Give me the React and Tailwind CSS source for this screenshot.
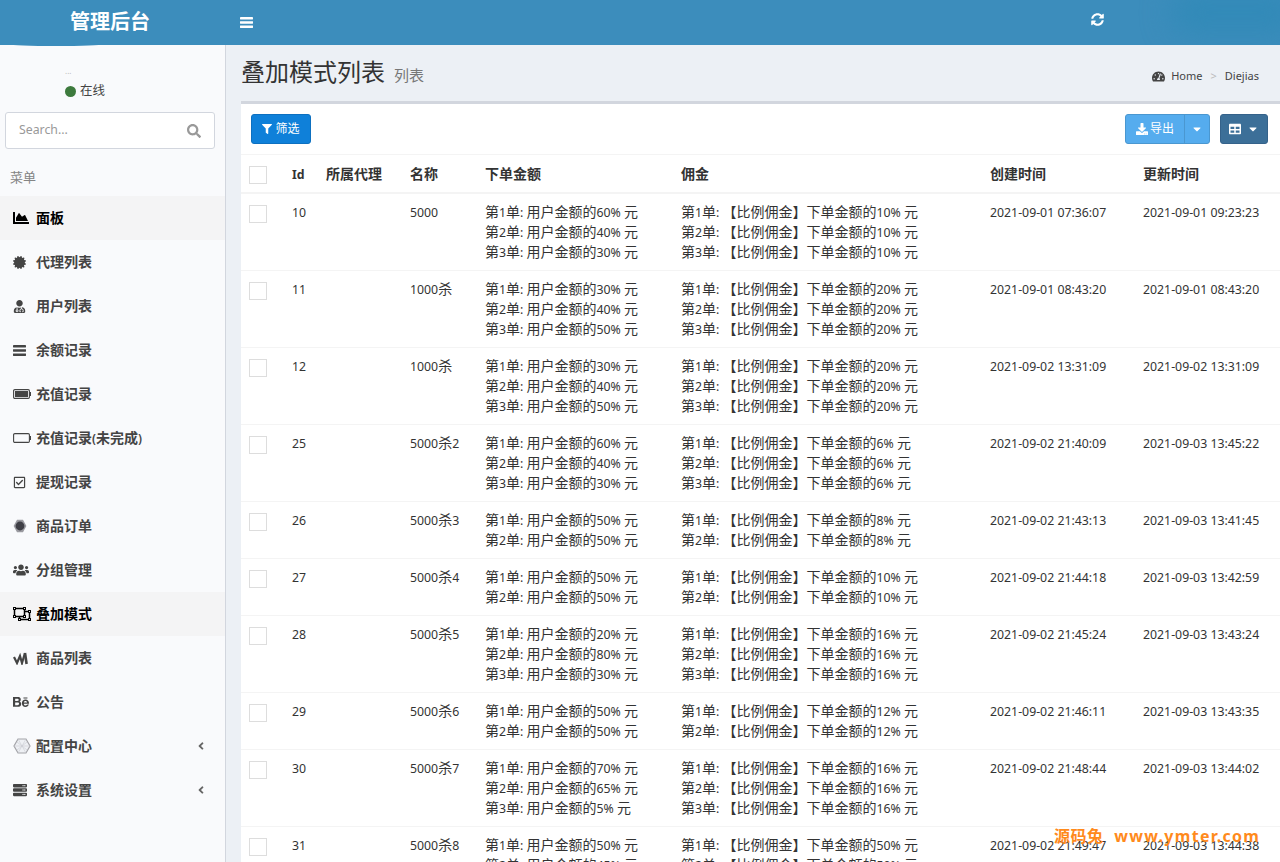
import { FaSyncAlt, FaSearch, FaChartArea, FaCertificate, FaUserMd, FaRegCheckSquare, FaUsers, FaRegObjectUngroup, FaBehance, FaServer, FaAngleLeft, FaTachometerAlt, FaFilter, FaDownload, FaTable, FaCaretDown } from 'react-icons/fa'

const FONT = '[font-family:"Noto_Sans","Noto_Sans_CJK_SC",sans-serif]'

function Bars() {
  return (
    <svg viewBox="0 0 13 11" className="w-[13px] h-[11px]" fill="currentColor">
      <rect y="0" width="13" height="2.5" rx=".4" />
      <rect y="4.2" width="13" height="2.5" rx=".4" />
      <rect y="8.4" width="13" height="2.5" rx=".4" />
    </svg>
  )
}

function Battery({ full }) {
  return (
    <svg viewBox="0 0 18 10" className="w-[18px] h-[10px]" fill="none">
      <rect x=".6" y=".6" width="15.8" height="8.8" rx="1.2" stroke="#444444" strokeWidth="1.1" />
      {full && <rect x="2" y="2" width="13" height="6" fill="#444444" />}
      <rect x="16.8" y="3" width="1.2" height="4" fill="#444444" />
    </svg>
  )
}

function DenseHex() {
  return (
    <svg viewBox="0 0 14 14" className="w-[14px] h-[14px]">
      <path d="M4 .8h6L13.4 7 10 13.2H4L.6 7z" fill="#9a9aa0" />
      <circle cx="7" cy="7" r="4.4" fill="#3f3f46" />
    </svg>
  )
}

function PaleHex() {
  return (
    <svg viewBox="0 0 18 16" className="w-[18px] h-[16px]">
      <path d="M5 1h8l4 7-4 7H5L1 8z" fill="#eef0f4" stroke="#a3a3a8" strokeWidth="1.2" />
      <path d="M5 1l8 14M13 1L5 15M1 8h16M4 4l10 8M14 4L4 12" stroke="#c9cbd1" strokeWidth=".6" />
    </svg>
  )
}

function WMark() {
  return (
    <svg viewBox="0 0 15 13" className="w-[15px] h-[13px]">
      <path d="M1 5l3 6 3-7 2 7 3-10" fill="none" stroke="#444444" strokeWidth="2.2" />
      <path d="M12 1l1.6 11" fill="none" stroke="#444444" strokeWidth="2.6" />
    </svg>
  )
}

const menu = [
  { icon: <FaChartArea className="w-[16px] h-[16px]" />, label: '面板', active: true },
  { icon: <FaCertificate className="w-[13px] h-[13px]" />, label: '代理列表' },
  { icon: <FaUserMd className="w-[13px] h-[13px]" />, label: '用户列表' },
  { icon: <Bars />, label: '余额记录' },
  { icon: <Battery full />, label: '充值记录' },
  { icon: <Battery />, label: '充值记录(未完成)' },
  { icon: <FaRegCheckSquare className="w-[13px] h-[13px]" />, label: '提现记录' },
  { icon: <DenseHex />, label: '商品订单' },
  { icon: <FaUsers className="w-[16px] h-[16px]" />, label: '分组管理' },
  { icon: <FaRegObjectUngroup className="w-[18px] h-[18px]" />, label: '叠加模式', active: true },
  { icon: <WMark />, label: '商品列表' },
  { icon: <FaBehance className="w-[16px] h-[16px]" />, label: '公告' },
  { icon: <PaleHex />, label: '配置中心', arrow: true },
  { icon: <FaServer className="w-[14px] h-[14px]" />, label: '系统设置', arrow: true },
]

const p = (a, b, c) => [a, b, c].filter(Boolean)

const rows = [
  { id: 10, name: '5000', pct: p(60, 40, 30), fee: p(10, 10, 10), created: '2021-09-01 07:36:07', updated: '2021-09-01 09:23:23' },
  { id: 11, name: '1000杀', pct: p(30, 40, 50), fee: p(20, 20, 20), created: '2021-09-01 08:43:20', updated: '2021-09-01 08:43:20' },
  { id: 12, name: '1000杀', pct: p(30, 40, 50), fee: p(20, 20, 20), created: '2021-09-02 13:31:09', updated: '2021-09-02 13:31:09' },
  { id: 25, name: '5000杀2', pct: p(60, 40, 30), fee: p(6, 6, 6), created: '2021-09-02 21:40:09', updated: '2021-09-03 13:45:22' },
  { id: 26, name: '5000杀3', pct: p(50, 50), fee: p(8, 8), created: '2021-09-02 21:43:13', updated: '2021-09-03 13:41:45' },
  { id: 27, name: '5000杀4', pct: p(50, 50), fee: p(10, 10), created: '2021-09-02 21:44:18', updated: '2021-09-03 13:42:59' },
  { id: 28, name: '5000杀5', pct: p(20, 80, 30), fee: p(16, 16, 16), created: '2021-09-02 21:45:24', updated: '2021-09-03 13:43:24' },
  { id: 29, name: '5000杀6', pct: p(50, 50), fee: p(12, 12), created: '2021-09-02 21:46:11', updated: '2021-09-03 13:43:35' },
  { id: 30, name: '5000杀7', pct: p(70, 65, 5), fee: p(16, 16, 16), created: '2021-09-02 21:48:44', updated: '2021-09-03 13:44:02' },
  { id: 31, name: '5000杀8', pct: p(50, 45, 30), fee: p(50, 50, 50), created: '2021-09-02 21:49:47', updated: '2021-09-03 13:44:38' },
]

// source font has narrow latin glyphs, so latin runs get a smaller size next to 14px CJK
function T({ children }) {
  const parts = String(children).split(/([\x20-\x7e]+)/).filter(Boolean)
  return parts.map((s, i) =>
    /^[\x20-\x7e]+$/.test(s) ? <span key={i} className="text-[12.3px] leading-none">{s}</span> : <span key={i}>{s}</span>
  )
}

function Check() {
  return <div className="w-[18px] h-[18px] border border-[#dddddd] bg-white" />
}

function Sidebar() {
  return (
    <aside className="w-[226px] shrink-0 bg-[#f9fafc] border-r border-[#d2d6de] h-[817px] relative overflow-hidden">
      <div className="absolute left-[10px] top-[-2px] w-[92px] h-[3px] rounded-[50%] bg-[#3c8dbc] blur-[0.5px]" />
      <div className="h-[67px] pt-[22px] pl-[65px] text-[12.5px] text-[#444444]">
        <div className="pl-0 h-[14px] text-[8px] leading-[8px] text-[#bbbbbb]">...</div>
        <div className="flex items-center gap-[4px] h-[20px]">
          <span className="w-[11px] h-[11px] rounded-full bg-[#3d7a3d]" />
          <span>在线</span>
        </div>
      </div>
      <div className="ml-[5px] mr-[10px] h-[37px] bg-white border border-[#d2d6de] rounded-[3px] flex items-center justify-between px-[13px]">
        <span className="text-[12.3px] text-[#999999]">Search...</span>
        <FaSearch className="text-[14px] text-[#999999]" />
      </div>
      <div className="h-[47px] pt-[19px] pl-[10px] text-[13px] text-[#848484] leading-[18px]">菜单</div>
      <nav>
        {menu.map((m, i) => (
          <div key={i} className={`h-[44px] flex items-center pl-[13px] pr-[18px] text-[14px] leading-[20px] ${m.active ? 'bg-[#f4f4f5] text-black font-bold' : 'text-[#444444] font-semibold'}`}>
            <span className="w-[23px] shrink-0 flex">{m.icon}</span>
            <span className="flex-1"><T>{m.label}</T></span>
            {m.arrow && <FaAngleLeft className="text-[12px] text-[#666666]" />}
          </div>
        ))}
      </nav>
    </aside>
  )
}

function Table() {
  return (
    <table className="w-full table-fixed border-collapse text-[14px] text-[#333333]">
      <colgroup>
        <col className="w-[43px]" />
        <col className="w-[34px]" />
        <col className="w-[84px]" />
        <col className="w-[75px]" />
        <col className="w-[196px]" />
        <col className="w-[309px]" />
        <col className="w-[153px]" />
        <col />
      </colgroup>
      <thead>
        <tr className="h-[38px] border-b-[2px] border-t border-[#f4f4f4]">
          <th className="pl-2 pt-[3px] text-left"><Check /></th>
          {['Id', '所属代理', '名称', '下单金额', '佣金', '创建时间', '更新时间'].map(h => (
            <th key={h} className="text-left font-bold pl-2"><T>{h}</T></th>
          ))}
        </tr>
      </thead>
      <tbody>
        {rows.map(r => (
          <tr key={r.id} className="border-b border-[#f4f4f4] align-top">
            <td className="pl-2 pt-[11px]"><Check /></td>
            <td className="pl-2 pt-[9px] text-[12.3px] leading-[20px]">{r.id}</td>
            <td />
            <td className="pl-2 pt-[8px] leading-[20px]"><T>{r.name}</T></td>
            <td className="pl-2 py-[8px] leading-[20px]">
              {r.pct.map((v, i) => (
                <div key={i}><T>{`第${i + 1}单: 用户金额的${v}% 元`}</T></div>
              ))}
            </td>
            <td className="pl-2 py-[8px] leading-[20px]">
              {r.fee.map((v, i) => (
                <div key={i}><T>{`第${i + 1}单: 【比例佣金】下单金额的${v}% 元`}</T></div>
              ))}
            </td>
            <td className="pl-2 pt-[9px] text-[12.3px] leading-[20px] whitespace-nowrap">{r.created}</td>
            <td className="pl-2 pt-[9px] text-[12.3px] leading-[20px] whitespace-nowrap">{r.updated}</td>
          </tr>
        ))}
      </tbody>
    </table>
  )
}

export default function App() {
  return (
    <div className={`h-[862px] overflow-hidden bg-[#ecf0f5] relative ${FONT}`}>
      <header className="h-[45px] bg-[#3c8dbc] flex items-center text-white relative overflow-hidden">
        <div className="w-[226px] shrink-0 pl-[70px] text-[20px] font-bold -mt-[2px]">管理后台</div>
        <span className="ml-[14px]"><Bars /></span>
        <FaSyncAlt className="absolute left-[1091px] top-[13px] text-[13px]" />
        <div className="absolute right-[-20px] top-[-10px] w-[130px] h-[45px] rounded-full bg-[#328ab8] blur-[14px]" />
      </header>
      <div className="flex">
        <Sidebar />
        <main className="flex-1 min-w-0">
          <div className="h-[56px] pl-[15px] pr-[21px] flex items-center justify-between">
            <div className="flex items-baseline gap-[9px] -mt-[3px]">
              <h1 className="text-[24px] font-normal text-[#333333]">叠加模式列表</h1>
              <span className="text-[15px] text-[#777777]">列表</span>
            </div>
            <div className="flex items-center text-[11px] text-[#444444] mt-[6px]">
              <FaTachometerAlt className="text-[13px] mr-[6px]" />
              <span>Home</span>
              <span className="mx-[8px] text-[#bbbbbb]">&gt;</span>
              <span>Diejias</span>
            </div>
          </div>
          <section className="ml-[15px] bg-white border-t-[3px] border-[#d2d6de]">
            <div className="h-[50px] px-[10px] flex items-center justify-between pr-[12px]">
              <button className="h-[30px] w-[60px] bg-[#0f80d9] border border-[#0d70c0] rounded-[3px] text-white text-[12px] flex items-center justify-center gap-[3px]">
                <FaFilter className="text-[10px]" /><span>筛选</span>
              </button>
              <div className="flex gap-[10px]">
                <div className="flex h-[30px] rounded-[3px] border border-[#4a97d0] bg-[#55acee] text-white text-[12px]">
                  <span className="w-[59px] flex items-center justify-center gap-[2px] border-r border-[#4a97d0]">
                    <FaDownload className="text-[12px]" />导出
                  </span>
                  <span className="w-[24px] flex items-center justify-center"><FaCaretDown className="text-[12px]" /></span>
                </div>
                <div className="flex h-[30px] w-[48px] rounded-[3px] border border-[#35628a] bg-[#3c6f98] text-white items-center justify-center gap-[6px]">
                  <FaTable className="text-[12px]" /><FaCaretDown className="text-[12px]" />
                </div>
              </div>
            </div>
            <Table />
          </section>
        </main>
      </div>
      <div className="absolute left-[1054px] top-[824px] text-[16px] font-bold text-[#ff8a1c] tracking-[0.5px] whitespace-nowrap">源码兔 <span className="ml-[6px] tracking-[1.3px]">www.ymter.com</span></div>
    </div>
  )
}
